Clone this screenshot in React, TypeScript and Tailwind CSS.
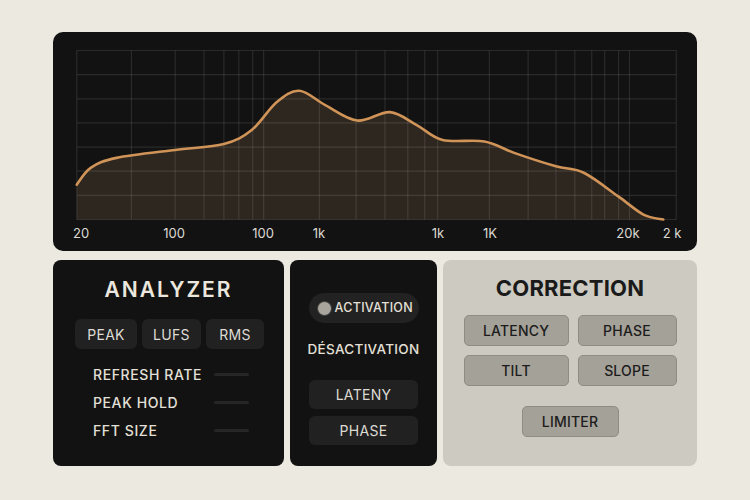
import React from 'react';

const W = 603;
const H = 170;

// vertical grid lines, x relative to the plot's left edge
const vLines = [0, 55, 99, 128, 148, 163, 177, 188, 244, 281, 310, 333, 350, 363, 415, 454, 482, 501, 518, 531, 545, 556, 603];
const hLines = [0, 1, 2, 3, 4, 5, 6, 7].map((i) => (i * H) / 7);

const curve: [number, number][] = [
  [0, 135], [14, 118], [40, 108], [99, 100], [148, 94], [176, 80], [201, 52], [224, 40.5],
  [250, 55], [282, 70.5], [315, 62], [342, 75], [368, 90], [410, 91.5],
  [440, 103], [482, 116.5], [510, 123], [545, 147], [570, 165], [590, 170],
];

function smoothPath(p: [number, number][]) {
  let d = `M${p[0][0]},${p[0][1]}`;
  for (let i = 0; i < p.length - 1; i++) {
    const p0 = p[i - 1] || p[i];
    const p1 = p[i];
    const p2 = p[i + 1];
    const p3 = p[i + 2] || p2;
    const c1x = p1[0] + (p2[0] - p0[0]) / 6;
    const c1y = p1[1] + (p2[1] - p0[1]) / 6;
    const c2x = p2[0] - (p3[0] - p1[0]) / 6;
    const c2y = p2[1] - (p3[1] - p1[1]) / 6;
    d += ` C${c1x.toFixed(1)},${c1y.toFixed(1)} ${c2x.toFixed(1)},${c2y.toFixed(1)} ${p2[0]},${p2[1]}`;
  }
  return d;
}

const line = smoothPath(curve);
const area = `${line} L${W},${H} L0,${H} Z`;

const axis = [
  { label: '20', cls: 'left-[-2px]' },
  { label: '100', cls: 'left-[99px] -translate-x-1/2' },
  { label: '100', cls: 'left-[188px] -translate-x-1/2' },
  { label: '1k', cls: 'left-[244px] -translate-x-1/2' },
  { label: '1k', cls: 'left-[363px] -translate-x-1/2' },
  { label: '1K', cls: 'left-[415px] -translate-x-1/2' },
  { label: '20k', cls: 'left-[553px] -translate-x-1/2' },
  { label: '2 k', cls: 'left-[597px] -translate-x-1/2' },
];

const Spectrum: React.FC = () => (
  <div className="h-[219px] rounded-[10px] bg-[#121212] pl-[22px] pr-[19px] pt-[18px]">
    <svg width={W} height={H} viewBox={`-0.5 -0.5 ${W + 1} ${H + 1}`} className="block overflow-visible">
      <path d={area} fill="#2e2720" />
      {hLines.map((y) => (
        <line key={`h${y}`} x1={0} x2={W} y1={y} y2={y} stroke="rgba(255,255,255,0.1)" strokeWidth={1.2} />
      ))}
      {vLines.map((x) => (
        <line key={`v${x}`} x1={x} x2={x} y1={0} y2={H} stroke="rgba(255,255,255,0.1)" strokeWidth={1.2} />
      ))}
      <path d={line} fill="none" stroke="#d09458" strokeWidth={2.6} strokeLinecap="round" />
    </svg>
    <div className="relative h-[31px] text-[13px] text-[#dcd9d2]">
      {axis.map((a, i) => (
        <span key={i} className={`absolute top-[4px] whitespace-nowrap leading-[18px] ${a.cls}`}>
          {a.label}
        </span>
      ))}
    </div>
  </div>
);

const darkBtn = 'flex items-center justify-center rounded-md bg-[#212121] text-[14px] text-[#dedbd4] tracking-[0.3px]';
const lightBtn =
  'flex items-center justify-center rounded-[5px] border border-[#8f8c84] bg-[#a4a198] text-[14px] font-medium text-[#1c1c1c] tracking-[0.2px]';

const Analyzer: React.FC = () => (
  <div className="w-[231px] rounded-lg bg-[#121212] pt-[19px]">
    <h2 className="text-center text-[21px] font-semibold leading-[16px] tracking-[2px] text-[#ebe7de] py-[3px]">ANALYZER</h2>
    <div className="mt-[18px] flex gap-[5px] pl-[22px]">
      <div className={`${darkBtn} h-[30px] w-[62px]`}>PEAK</div>
      <div className={`${darkBtn} h-[30px] w-[59px]`}>LUFS</div>
      <div className={`${darkBtn} h-[30px] w-[58px]`}>RMS</div>
    </div>
    <div className="mt-[16px] flex flex-col gap-[10px] pl-[40px] pr-[35px]">
      {['REFRESH RATE', 'PEAK HOLD', 'FFT SIZE'].map((t) => (
        <div key={t} className="flex h-[18px] items-center justify-between">
          <span className="text-[14px] font-medium tracking-[0.6px] text-[#e4e0d8]">{t}</span>
          <span className="h-[3px] w-[35px] rounded-full bg-[#262626]" />
        </div>
      ))}
    </div>
  </div>
);

const Toggles: React.FC = () => (
  <div className="flex w-[147px] flex-col items-center rounded-lg bg-[#121212] pt-[33px]">
    <div className="flex h-[30px] w-[110px] items-center gap-[3px] rounded-full bg-[#222222] pl-[8px]">
      <span className="h-[15px] w-[15px] rounded-full border border-[#3a3a3a] bg-[#a9a59c]" />
      <span className="text-[12.5px] font-medium tracking-[0.3px] text-[#e4e0d8]">ACTIVATION</span>
    </div>
    <div className="mt-[16px] text-[13.5px] font-medium tracking-[0.3px] text-[#e4e0d8]">DÉSACTIVATION</div>
    <div className="mt-[21px] flex flex-col gap-[7px]">
      <div className={`${darkBtn} h-[29px] w-[109px] text-[#cfcbc3]`}>LATENY</div>
      <div className={`${darkBtn} h-[29px] w-[109px] text-[#cfcbc3]`}>PHASE</div>
    </div>
  </div>
);

const Correction: React.FC = () => (
  <div className="flex flex-1 flex-col items-center rounded-lg bg-[#cdcac1] pt-[17px]">
    <h2 className="text-[22px] font-bold leading-[18px] tracking-[0.2px] text-[#1a1a1a] py-[2px]">CORRECTION</h2>
    <div className="mt-[16px] grid grid-cols-[105px_99px] gap-x-[9px] gap-y-[9px]">
      <div className={`${lightBtn} h-[31px]`}>LATENCY</div>
      <div className={`${lightBtn} h-[31px]`}>PHASE</div>
      <div className={`${lightBtn} h-[31px]`}>TILT</div>
      <div className={`${lightBtn} h-[31px]`}>SLOPE</div>
    </div>
    <div className={`${lightBtn} mt-[20px] h-[31px] w-[97px]`}>LIMITER</div>
  </div>
);

export default function App() {
  return (
    <div
      className="h-[500px] w-[750px] bg-[#ece9e0] pl-[53px] pr-[53px] pt-[32px]"
      style={{ fontFamily: 'Inter, "Liberation Sans", sans-serif' }}
    >
      <Spectrum />
      <div className="mt-[9px] flex h-[206px] gap-[6px]">
        <Analyzer />
        <Toggles />
        <Correction />
      </div>
    </div>
  );
}
